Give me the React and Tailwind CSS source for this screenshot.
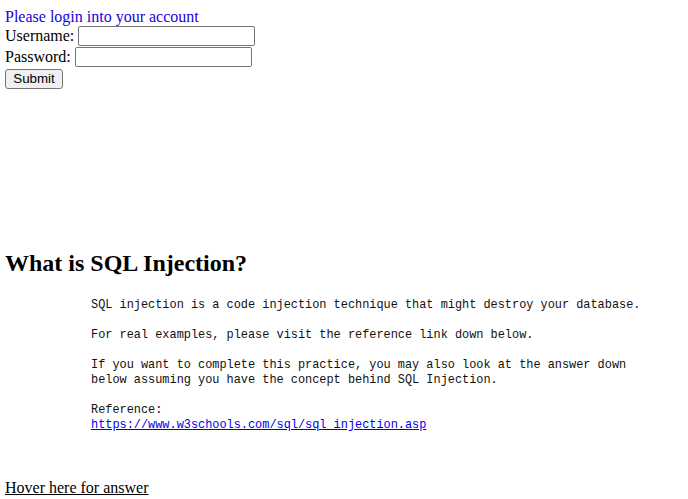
export default function App() {
  const serif = { fontFamily: '"Liberation Serif", "Times New Roman", serif' };
  return (
    <div className="min-h-[499px] bg-white text-black pl-[5px] pt-[8px]" style={serif}>
      <div className="text-[16px] leading-[17px] text-[#1a00e0]">Please login into your account</div>
      <div className="flex items-center h-[21px] text-[16px] leading-[18px]">
        <span>Username:</span>
        <input className="ml-[4px] w-[177px] h-[20px] border border-[#767676] rounded-[2px] bg-white px-[2px] text-[13px] outline-none" />
      </div>
      <div className="flex items-center h-[21px] text-[16px] leading-[18px]">
        <span>Password:</span>
        <input type="password" className="ml-[4px] w-[177px] h-[20px] border border-[#767676] rounded-[2px] bg-white px-[2px] text-[13px] outline-none" />
      </div>
      <div className="mt-[2px] flex">
        <button className="h-[20px] w-[58px] border border-[#767676] rounded-[3px] bg-[#efefef] text-[13.33px] leading-[16px] text-black" style={{ fontFamily: '"Liberation Sans", Arial, sans-serif' }}>Submit</button>
      </div>
      <h2 className="mt-[160px] text-[24px] leading-[28px] font-bold">What is SQL Injection?</h2>
      <pre
        className="mt-[21px] pl-[86px] text-[11.9px] leading-[15px] text-[#111]"
        style={{ fontFamily: '"Liberation Mono", Consolas, monospace' }}
      >{`SQL injection is a code injection technique that might destroy your database.

For real examples, please visit the reference link down below.

If you want to complete this practice, you may also look at the answer down
below assuming you have the concept behind SQL Injection.

Reference:
`}<a href="#" className="text-[#0000ee] underline">https://www.w3schools.com/sql/sql_injection.asp</a></pre>
      <div className="mt-[46px] text-[16px] leading-[18px] underline">Hover here for answer</div>
    </div>
  );
}
